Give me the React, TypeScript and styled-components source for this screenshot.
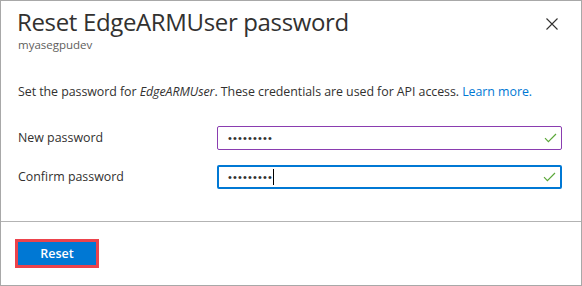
import styled, { createGlobalStyle } from "styled-components";

const GlobalStyle = createGlobalStyle`
  html, body {
    margin: 0;
    padding: 0;
    background: #ffffff;
  }
  * {
    box-sizing: border-box;
  }
`;

const fields = [
  { label: "New password", focused: false },
  { label: "Confirm password", focused: true },
];

const CheckIcon = () => (
  <svg width="13" height="10" viewBox="0 0 13 10" fill="none">
    <path d="M1 5.2 L4.4 8.6 L12 1" stroke="#5ca83a" strokeWidth="1.2" />
  </svg>
);

const CloseIcon = () => (
  <svg width="12" height="12" viewBox="0 0 12 12" fill="none">
    <path d="M0.5 0.5 L11.5 11.5 M11.5 0.5 L0.5 11.5" stroke="#323130" strokeWidth="1.1" />
  </svg>
);

const App = () => {
  return (
    <>
      <GlobalStyle />
      <Panel>
        <Header>
          <TitleBlock>
            <Title>Reset EdgeARMUser password</Title>
            <Subtitle>myasegpudev</Subtitle>
          </TitleBlock>
          <CloseButton aria-label="Close">
            <CloseIcon />
          </CloseButton>
        </Header>
        <Body>
          <Description>
            Set the password for <em>EdgeARMUser</em>. These credentials are used
            for API access. <Link>Learn more.</Link>
          </Description>
          <Form>
            {fields.map((f) => (
              <Row key={f.label}>
                <Label>{f.label}</Label>
                <Field $focused={f.focused}>
                  <Dots>•••••••••</Dots>
                  {f.focused && <Caret />}
                  <Check>
                    <CheckIcon />
                  </Check>
                </Field>
              </Row>
            ))}
          </Form>
        </Body>
        <Footer>
          <ResetButton>Reset</ResetButton>
        </Footer>
      </Panel>
    </>
  );
};

export default App;

const Panel = styled.div`
  width: 582px;
  height: 286px;
  border: 1px solid #a8a8a8;
  display: flex;
  flex-direction: column;
  font-family: "Open Sans", "Noto Sans", sans-serif;
  color: #323130;
`;

const Header = styled.div`
  display: flex;
  justify-content: space-between;
  align-items: flex-start;
  padding: 6px 23px 0 16px;
`;

const TitleBlock = styled.div`
  display: flex;
  flex-direction: column;
`;

const Title = styled.h1`
  margin: 0;
  font-size: 24px;
  line-height: 29px;
  font-weight: 400;
  letter-spacing: -0.35px;
  color: #323130;
`;

const Subtitle = styled.div`
  font-size: 11.5px;
  line-height: 16px;
  margin-top: 1px;
  padding-left: 1px;
  color: #605e5c;
`;

const CloseButton = styled.button`
  border: 0;
  background: none;
  padding: 0;
  margin-top: 11px;
  width: 12px;
  height: 12px;
  display: flex;
  cursor: pointer;
`;

const Body = styled.div`
  flex: 1;
  padding: 30px 19px 0 17px;
`;

const Description = styled.p`
  margin: 0;
  font-size: 12.4px;
  line-height: 18px;
  letter-spacing: -0.05px;
  em {
    font-style: italic;
  }
`;

const Link = styled.a`
  color: #0078d4;
  cursor: pointer;
`;

const Form = styled.div`
  display: flex;
  flex-direction: column;
  gap: 15px;
  margin-top: 25px;
`;

const Row = styled.div`
  display: grid;
  grid-template-columns: 199px 1fr;
  align-items: center;
`;

const Label = styled.label`
  font-size: 12.4px;
  line-height: 18px;
`;

const Field = styled.div<{ $focused: boolean }>`
  position: relative;
  height: 24px;
  display: flex;
  align-items: center;
  padding-left: ${({ $focused }) => ($focused ? "9px" : "10px")};
  border: ${({ $focused }) => ($focused ? "2px solid #0078d4" : "1px solid #8a3db0")};
  border-radius: 2px;
`;

const Dots = styled.span`
  font-family: "Liberation Sans", sans-serif;
  font-size: 11px;
  letter-spacing: 1.15px;
  color: #323130;
  line-height: 1;
`;

const Caret = styled.span`
  width: 1px;
  height: 16px;
  background: #000000;
`;

const Check = styled.span`
  position: absolute;
  right: 4px;
  top: 50%;
  transform: translateY(-50%);
  display: flex;
`;

const Footer = styled.div`
  border-top: 1px solid #b3b3b3;
  height: 64px;
  padding: 17px 0 0 14px;
`;

const ResetButton = styled.button`
  width: 84px;
  height: 29px;
  border: 3px solid #ec434c;
  background: #0078d4;
  color: #ffffff;
  font-family: "Open Sans", "Noto Sans", sans-serif;
  font-weight: 600;
  font-size: 12.5px;
  padding: 0;
  cursor: pointer;
`;
